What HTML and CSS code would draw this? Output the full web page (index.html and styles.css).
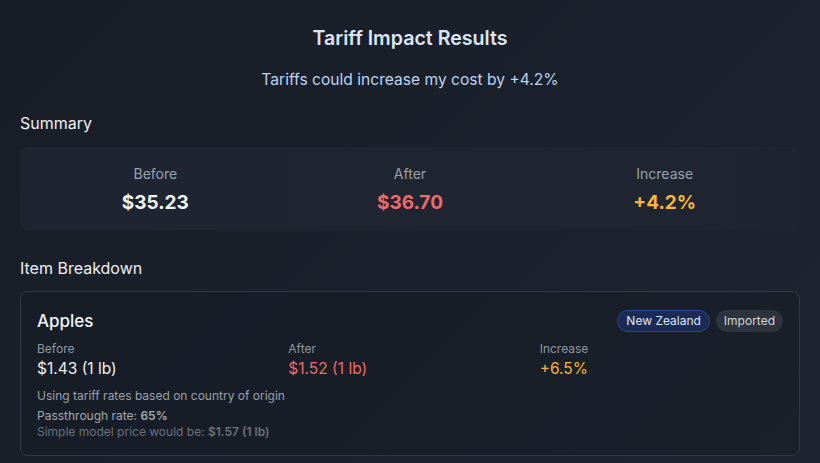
FILE: index.html
```html
<!DOCTYPE html>
<html lang="en">
<head>
<meta charset="utf-8">
<title>Tariff Impact Results</title>
<link rel="stylesheet" href="styles.css">
</head>
<body>
<main class="page">
  <h1 class="title">Tariff Impact Results</h1>
  <p class="subtitle">Tariffs could increase my cost by +4.2%</p>

  <h2 class="section-title">Summary</h2>
  <section class="summary">
    <div class="stat">
      <div class="stat-label">Before</div>
      <div class="stat-value">$35.23</div>
    </div>
    <div class="stat">
      <div class="stat-label">After</div>
      <div class="stat-value red">$36.70</div>
    </div>
    <div class="stat">
      <div class="stat-label">Increase</div>
      <div class="stat-value amber">+4.2%</div>
    </div>
  </section>

  <h2 class="section-title breakdown-title">Item Breakdown</h2>
  <section class="item">
    <div class="item-head">
      <h3 class="item-name">Apples</h3>
      <div class="badges">
        <span class="badge badge-country">New Zealand</span>
        <span class="badge badge-type">Imported</span>
      </div>
    </div>
    <div class="item-grid">
      <div class="cell">
        <div class="cell-label">Before</div>
        <div class="cell-value">$1.43 (1 lb)</div>
      </div>
      <div class="cell">
        <div class="cell-label">After</div>
        <div class="cell-value red">$1.52 (1 lb)</div>
      </div>
      <div class="cell">
        <div class="cell-label">Increase</div>
        <div class="cell-value amber">+6.5%</div>
      </div>
    </div>
    <p class="note">Using tariff rates based on country of origin</p>
    <p class="pass">Passthrough rate: <strong>65%</strong></p>
    <p class="simple">Simple model price would be: <strong>$1.57 (1 lb)</strong></p>
  </section>
</main>
</body>
</html>
```

FILE: styles.css
```css
* { box-sizing: border-box; }
html, body { margin: 0; padding: 0; }
body {
  width: 820px;
  height: 463px;
  overflow: hidden;
  font-family: Inter, "Noto Sans", "Liberation Sans", sans-serif;
  background: linear-gradient(135deg, #181d27 0%, #1b212c 55%, #1f2530 100%);
  color: #e5e7eb;
}
.page {
  padding: 26px 20px 0 20px;
}
.title {
  margin: 0;
  text-align: center;
  font-size: 19.6px;
  font-weight: 600;
  line-height: 24px;
  color: #dbe5f4;
}
.subtitle {
  margin: 18px 0 0 0;
  text-align: center;
  font-size: 15.6px;
  line-height: 24px;
  color: #bdd3ef;
}
.section-title {
  margin: 19px 0 0 0;
  font-size: 16px;
  font-weight: 400;
  line-height: 24px;
  color: #eef0f3;
}
.summary {
  margin-top: 12px;
  display: grid;
  grid-template-columns: repeat(3, 1fr);
  gap: 16px;
  padding: 17px 16px 16px 16px;
  height: 83px;
  border-radius: 8px;
  background: linear-gradient(90deg, #1f2530 0%, #1f2631 80%, #1e2430 100%);
}
.stat {
  text-align: center;
}
.stat-label {
  font-size: 14px;
  line-height: 20px;
  color: #9aa1ab;
}
.stat-value {
  margin-top: 7px;
  font-size: 19px;
  font-weight: 700;
  line-height: 24px;
  color: #f4f6f8;
}
.breakdown-title {
  margin-top: 26px;
}
.item {
  margin-top: 11px;
  border: 1px solid #323946;
  border-radius: 8px;
  padding: 16px 16px 15px 16px;
  background: rgba(20, 25, 34, 0.35);
}
.item-head {
  display: flex;
  align-items: center;
  justify-content: space-between;
  height: 26px;
}
.item-name {
  margin: 0;
  font-size: 17px;
  font-weight: 500;
  line-height: 24px;
  color: #f1f3f5;
}
.badges {
  display: flex;
  gap: 6px;
}
.badge {
  display: inline-flex;
  align-items: center;
  height: 22px;
  padding: 0 8px;
  border-radius: 11px;
  font-size: 12px;
  line-height: 1;
}
.badge-country {
  background: #1c2b55;
  border: 1px solid #2a4594;
  color: #dde7fb;
}
.badge-type {
  background: #2e343e;
  color: #d3d7dd;
}
.item-grid {
  margin-top: 7px;
  display: grid;
  grid-template-columns: repeat(3, 1fr);
  gap: 8px;
}
.cell-label {
  font-size: 12px;
  line-height: 16px;
  color: #8f96a0;
}
.cell-value {
  margin-top: 1px;
  font-size: 15.5px;
  line-height: 22px;
  color: #eef0f2;
}
.stat-value.red, .cell-value.red { color: #f06a6a; }
.stat-value.amber, .cell-value.amber { color: #f7b53a; }
.note {
  margin: 8px 0 0 0;
  font-size: 12px;
  line-height: 16px;
  color: #9aa0a9;
}
.pass {
  margin: 4px 0 0 0;
  font-size: 12px;
  line-height: 16px;
  color: #a3a8b0;
}
.pass strong {
  font-weight: 600;
}
.simple {
  margin: 0;
  font-size: 12px;
  line-height: 16px;
  color: #6b717b;
}
.simple strong {
  font-weight: 600;
}
```
